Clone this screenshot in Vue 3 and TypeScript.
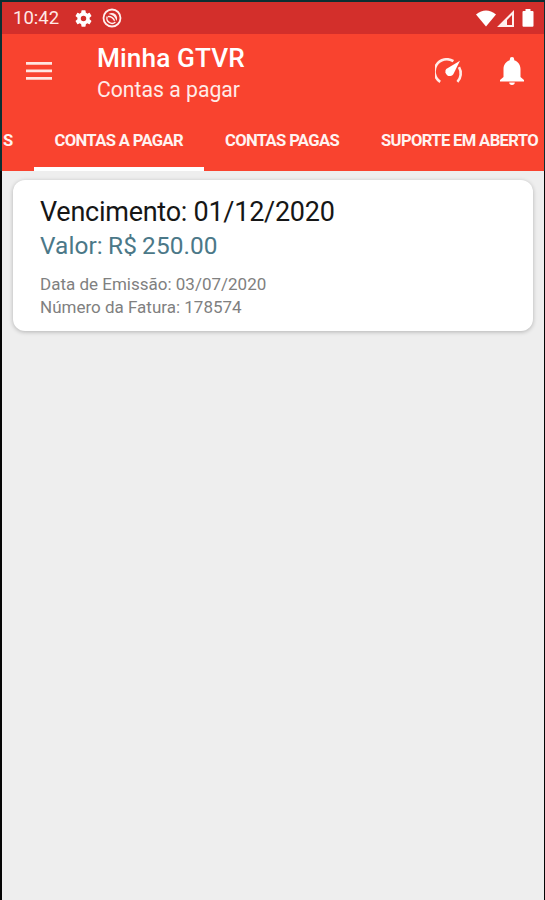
<script setup lang="ts">
interface Bill {
  due: string
  amount: string
  issued: string
  invoice: string
}

const tabs: string[] = ['S', 'CONTAS A PAGAR', 'CONTAS PAGAS', 'SUPORTE EM ABERTO']
const activeTab = 'CONTAS A PAGAR'
const bills: Bill[] = [
  { due: '01/12/2020', amount: 'R$ 250.00', issued: '03/07/2020', invoice: '178574' },
]
</script>

<template>
  <div class="screen">
    <header class="header">
      <div class="status">
        <span class="clock">10:42</span>
        <svg class="gear" viewBox="2 2 20 20"><path fill="#fff" d="M19.14 12.94c.04-.3.06-.61.06-.94s-.02-.64-.07-.94l2.03-1.58a.49.49 0 0 0 .12-.61l-1.92-3.32a.49.49 0 0 0-.59-.22l-2.39.96a7 7 0 0 0-1.62-.94l-.36-2.54a.48.48 0 0 0-.48-.41h-3.84a.47.47 0 0 0-.47.41l-.36 2.54c-.59.24-1.13.57-1.62.94l-2.39-.96a.48.48 0 0 0-.59.22L2.74 8.87a.48.48 0 0 0 .12.61l2.03 1.58a7.5 7.5 0 0 0 0 1.88l-2.03 1.58a.49.49 0 0 0-.12.61l1.92 3.32c.12.22.37.29.59.22l2.39-.96c.5.38 1.03.7 1.62.94l.36 2.54c.05.24.24.41.48.41h3.84c.24 0 .44-.17.47-.41l.36-2.54a6.8 6.8 0 0 0 1.62-.94l2.39.96c.22.08.47 0 .59-.22l1.92-3.32a.48.48 0 0 0-.12-.61zM12 15.2A3.2 3.2 0 1 1 12 8.8a3.2 3.2 0 0 1 0 6.4z" /></svg>
        <svg class="ring" viewBox="0 0 20 20" fill="none" stroke="#ffefed">
          <circle cx="10" cy="10" r="8.5" stroke-width="1.8" />
          <path d="M5.2 8.5A5.1 5.1 0 0 0 13.4 14" stroke-width="1.4" />
          <path d="M6 8.6 Q10.4 8.2 12.6 12.8" stroke-width="1.4" />
          <path d="M6.5 6 Q10 3.8 13.4 6.3 Q16 9 14.6 13 Q12.6 6.6 6.5 6Z" fill="#ffefed" stroke="none" />
        </svg>
        <span class="grow"></span>
        <svg class="wifi" viewBox="0 0 20 17"><path fill="#fff" d="M0 4.5 Q10-3.3 20 4.5 L10 16.5Z" /></svg>
        <svg class="signal" viewBox="0 0 17 17"><path fill="#ffefed" fill-rule="evenodd" d="M17 0V17H0ZM15 5L10 10V15H15Z" /></svg>
        <svg class="battery" viewBox="0 0 12 18"><path fill="#fff" d="M3.5 0H8.5V2H10.5Q11.5 2 11.5 3V16.8Q11.5 17.8 10.5 17.8H1.5Q.5 17.8.5 16.8V3Q.5 2 1.5 2H3.5Z" /></svg>
      </div>

      <div class="toolbar">
        <svg class="menu" viewBox="0 0 26 18"><path fill="#ffe6e1" d="M0 0h26v2.8H0zM0 7.5h26v2.8H0zM0 15h26v2.8H0z" /></svg>
        <div class="titles">
          <div class="title">Minha GTVR</div>
          <div class="subtitle">Contas a pagar</div>
        </div>
        <svg class="gauge" viewBox="0 0 28 26">
          <g fill="none" stroke="#ffebe7" stroke-width="2.6">
            <path d="M5.2 23.8A12.2 12.2 0 0 1 18.4 3.2" />
            <path d="M24 9.2A12.2 12.2 0 0 1 22.4 23.8" />
          </g>
          <path fill="#fff" d="M25 2.8L18.3 16.2A4.4 4.4 0 1 1 11.2 11Z" />
        </svg>
        <svg class="bell" viewBox="0 0 24 28"><path fill="#fff" d="M12 0A2.2 2.2 0 0 0 9.8 2.2V3.3C6 4.4 3.5 7.8 3.5 12V20L0 23V24.6H24V23L20.5 20V12C20.5 7.8 18 4.4 14.2 3.3V2.2A2.2 2.2 0 0 0 12 0ZM9.2 25.6A2.8 2.4 0 0 0 14.8 25.6Z" /></svg>
      </div>

      <nav class="tabs">
        <div v-for="tab in tabs" :key="tab" class="tab" :class="{ active: tab === activeTab }">{{ tab }}</div>
      </nav>
    </header>

    <main class="content">
      <article v-for="bill in bills" :key="bill.invoice" class="card">
        <div class="due">Vencimento: {{ bill.due }}</div>
        <div class="amount">Valor: {{ bill.amount }}</div>
        <div class="detail issued">Data de Emissão: {{ bill.issued }}</div>
        <div class="detail invoice">Número da Fatura: {{ bill.invoice }}</div>
      </article>
    </main>
  </div>
</template>

<style>
body {
  background: #050505;
}
</style>

<style scoped>
.screen {
  width: 545px;
  height: 900px;
  box-sizing: border-box;
  overflow: hidden;
  display: flex;
  flex-direction: column;
  font-family: Roboto, "Liberation Sans", sans-serif;
  white-space: nowrap;
}
.header {
  height: 171px;
  flex: none;
  box-sizing: border-box;
  padding: 2px 1px 0 2px;
  background: #0b2f31;
  color: #fff;
  display: flex;
  flex-direction: column;
}
.status {
  height: 32px;
  flex: none;
  background: #d32f2b;
  display: flex;
  align-items: center;
  box-sizing: border-box;
  padding: 0 10px 0 11px;
}
.clock {
  width: 62px;
  font-size: 18.5px;
  line-height: 32px;
  color: #ffe9e7;
}
.gear { width: 17px; height: 17px; }
.ring { width: 20px; height: 20px; margin-left: 10px; }
.grow { flex: 1; }
.wifi { width: 20px; height: 17px; }
.signal { width: 17px; height: 17px; margin-left: 1px; }
.battery { width: 12px; height: 18px; margin-left: 8px; }
.toolbar {
  height: 76px;
  flex: none;
  background: #f9432f;
  display: flex;
  align-items: center;
  box-sizing: border-box;
  padding: 0 20px 0 24px;
}
.menu { width: 26px; height: 18px; margin-top: -2px; }
.titles {
  flex: 1;
  margin-left: 45px;
  padding-top: 2px;
}
.title {
  font-size: 26.2px;
  line-height: 32px;
  font-weight: 500;
  letter-spacing: 0.12px;
}
.subtitle {
  font-size: 21.2px;
  line-height: 31px;
  color: #ffebe8;
}
.gauge { width: 28px; height: 26px; margin-bottom: 3px; }
.bell { width: 24px; height: 28px; margin: 0 0 3px 37px; }
.tabs {
  flex: 1;
  background: #f9432f;
  display: flex;
  overflow: hidden;
  justify-content: flex-end;
}
.tab {
  flex: none;
  box-sizing: border-box;
  padding: 0 21px;
  font-size: 16.6px;
  line-height: 62px;
  font-weight: 700;
  letter-spacing: -0.64px;
  color: #fff3f1;
}
.tab:first-child { padding-left: 0; }
.tab:last-child { padding-right: 6px; }
.tab.active { box-shadow: inset 0 -4px #fff; }
.content {
  flex: 1;
  margin: 0 1px 0 2px;
  padding: 9px 11px 0;
  background: #eee;
}
.card {
  height: 151px;
  box-sizing: border-box;
  padding: 14px 27px 0;
  border-radius: 12px;
  background: #fff;
  box-shadow: 0 1px 4px rgba(0, 0, 0, 0.25);
}
.due {
  font-size: 27px;
  line-height: 36px;
  letter-spacing: -0.26px;
  color: #161616;
}
.amount {
  font-size: 24.4px;
  line-height: 32px;
  word-spacing: -1px;
  letter-spacing: 0.1px;
  color: #4b7888;
}
.detail {
  font-size: 17px;
  line-height: 23px;
  color: #808080;
}
.issued { margin-top: 11px; }
</style>
